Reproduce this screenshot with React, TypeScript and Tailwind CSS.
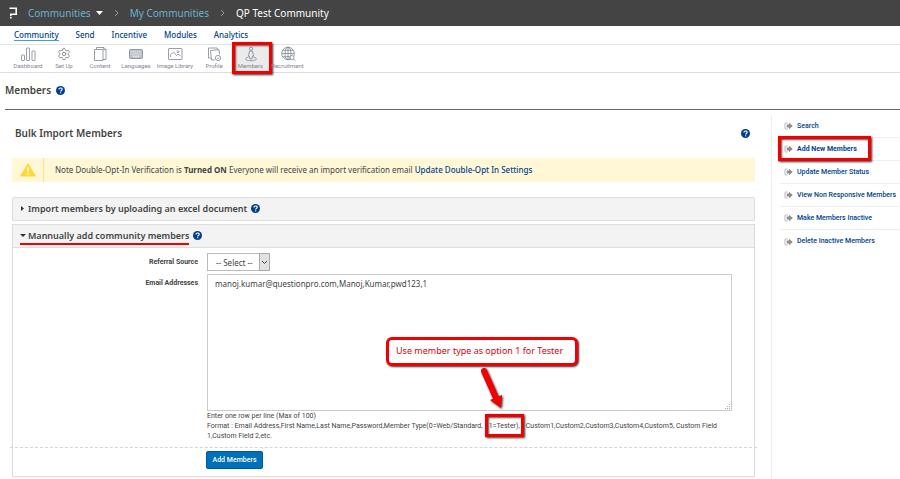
import { useState } from "react";
import type { ReactNode } from "react";
import { Settings } from "lucide-react";

type Tool = { label: string; icon: ReactNode; width: string; active?: boolean };

const navItems = ["Community", "Send", "Incentive", "Modules", "Analytics"];

const sideLinks = [
  "Search",
  "Add New Members",
  "Update Member Status",
  "View Non Responsive Members",
  "Make Members Inactive",
  "Delete Inactive Members",
];

const tools: Tool[] = [
  {
    label: "Dashboard",
    width: "w-9",
    icon: (
      <>
        <rect x="1.500" y="9" width="3" height="5.500" rx="0.500" />
        <rect x="6.500" y="2" width="3" height="12.500" rx="0.500" />
        <rect x="12" y="5" width="3" height="9.500" rx="0.500" />
      </>
    ),
  },
  {
    label: "Set Up",
    width: "w-9",
    icon: <Settings x="1" y="1" width="14" height="14" strokeWidth="1.500" />,
  },
  {
    label: "Content",
    width: "w-9",
    icon: (
      <>
        <path d="M2.500 3.500h8.500v11H2.500z" />
        <path d="M4.500 3.500V1.500h7.500l2 2.200V13.500h-3M11.500 1.500l.3 2.200H14" />
      </>
    ),
  },
  {
    label: "Languages",
    width: "w-9",
    icon: (
      <>
        <rect x="1.500" y="3.500" width="13" height="9" rx="0.800" fill="#c0c5cc" />
        <path d="M3 5.800h10M3.500 8h9" strokeDasharray="1.200 .8" stroke="#eef0f2" />
        <path d="M5 10.300h6" stroke="#eef0f2" />
      </>
    ),
  },
  {
    label: "Image Library",
    width: "w-[42px]",
    icon: (
      <>
        <rect x="1.500" y="2.500" width="13.500" height="11" rx="0.500" />
        <path d="M3.500 11v-2l3-3 3 3.500L11 8l2.500 2" />
        <circle cx="11" cy="5.800" r="1" />
      </>
    ),
  },
  {
    label: "Profile",
    width: "w-9",
    icon: (
      <>
        <path d="M9 14H5.500L4.500 4.500l8.500-.8.500 4.800" />
        <path d="M4.800 12H2.500V2h8.500l.8 1.700" />
        <circle cx="12" cy="12" r="2.600" />
        <path d="M10.900 12l.9.800 1.300-1.500" />
      </>
    ),
  },
  {
    label: "Members",
    width: "w-[37px]",
    active: true,
    icon: (
      <>
        <circle cx="8" cy="2.800" r="1.600" />
        <path d="M6.500 5.200h3l1.200 5h-1.200l-.5 2.800H7l-.5-2.800H5.300z" />
        <path d="M5.500 11.200c-4 .6-4.500 3.500 2.500 3.500s6.500-2.900 2.500-3.500" />
      </>
    ),
  },
  {
    label: "Recruitment",
    width: "w-[37px]",
    icon: (
      <>
        <circle cx="8" cy="7.500" r="6.300" />
        <ellipse cx="8" cy="7.500" rx="3" ry="6.300" />
        <path d="M1.700 7.500h12.600M2.700 4.300h10.600M2.700 10.700h8M8 1.200v12.600" />
        <circle cx="12" cy="11.500" r="2" fill="#fff" />
        <path d="M13.400 13l1.800 1.800" />
      </>
    ),
  },
];

function HelpIcon({ label }: { label: string }) {
  return (
    <button type="button" aria-label={label} className="block shrink-0">
      <svg className="size-[9px]" viewBox="0 0 18 18">
        <circle cx="9" cy="9" r="9" fill="#003f8f" />
        <path d="M5.800 7c0-4 6.600-4 6.600-.3 0 2.300-3.100 2.200-3.100 4.300" fill="none" stroke="#fff" strokeWidth="2.300" />
        <circle cx="9.300" cy="13.700" r="1.400" fill="#fff" />
      </svg>
    </button>
  );
}

function ExitIcon() {
  return (
    <svg className="h-2 w-[9px] shrink-0" viewBox="0 0 18 16">
      <path d="M7 2H3.500Q2 2 2 3.500v9Q2 14 3.500 14H7" fill="none" stroke="#a5a5a5" strokeWidth="1.600" />
      <path d="M5.500 5H10V1.500L17.500 8 10 14.500V11H5.500z" fill="#8d8d8d" />
    </svg>
  );
}

// red frame laid over whatever is being pointed out
function Highlight({ className }: { className: string }) {
  return (
    <span
      className={`pointer-events-none absolute border-3 border-[#f00000] shadow-[1px_1px_2px_#333,inset_1px_1px_2px_#555] ${className}`}
    />
  );
}

function Separator() {
  return (
    <svg className="mx-[11px] h-2 w-[5px]" viewBox="0 0 5 8" fill="none" stroke="#999">
      <path d="M1 1l3 3-3 3" />
    </svg>
  );
}

function TopBar() {
  return (
    <header className="flex h-[26px] items-center bg-[#444] pl-[9px] text-[10px] text-[#6db1cd]">
      <svg className="mr-[11px] h-3 w-2" viewBox="0 0 8 12" fill="none" stroke="#fff" strokeWidth="1.600">
        <path d="M.5 1.300h6.700v5.900H1.800V9" />
        <path d="M1.800 9.800v1.700" />
      </svg>
      <a href="#communities">Communities</a>
      <svg className="ml-[5px] h-1 w-[7px]" viewBox="0 0 7 4">
        <path d="M0 0h7L3.500 4z" fill="#fff" />
      </svg>
      <Separator />
      <a href="#mine">My Communities</a>
      <Separator />
      <span className="text-white">QP Test Community</span>
    </header>
  );
}

function App() {
  const [emails, setEmails] = useState<string>("manoj.kumar@questionpro.com,Manoj,Kumar,pwd123,1");

  return (
    <div className="min-h-screen overflow-x-hidden bg-white font-['Noto_Sans',sans-serif] text-[8px] leading-[11px] text-[#444]">
      <TopBar />

      <nav className="flex h-[19px] items-center gap-[17px] border-b border-[#e4e4e4] pl-3.5 font-medium text-[#00448a]">
        {navItems.map((item, i) => (
          <a key={item} href={`#${item}`} className={i === 0 ? "border-b border-[#3aa0d8]" : "border-b border-transparent"}>
            {item}
          </a>
        ))}
      </nav>

      <div className="flex h-7 border-b border-[#ddd] pl-2.5">
        {tools.map((tool) => (
          <button
            key={tool.label}
            type="button"
            className={`relative flex shrink-0 flex-col items-center pt-px font-['Roboto',sans-serif] text-[6px] leading-2 text-[#7f8791] ${tool.width} ${tool.active ? "bg-[#ebebeb]" : ""}`}
          >
            <svg className="size-4 shrink-0" viewBox="0 0 16 16" fill="none" stroke="#7f8791" strokeWidth="0.800">
              {tool.icon}
            </svg>
            <span className="whitespace-nowrap">{tool.label}</span>
            {tool.active && <Highlight className="-top-[3px] left-0 h-8 w-10" />}
          </button>
        ))}
      </div>

      <div className="ml-[5px] flex h-[37px] items-center gap-[5px] border-b border-[#666] pb-px">
        <h1 className="text-[10px] font-semibold">Members</h1>
        <HelpIcon label="Members help" />
      </div>

      <div className="flex">
        <main className="min-w-0 flex-1 pt-[15px] pr-4 pl-3">
          <div className="flex h-4 items-center justify-between pr-[5px] pl-[3px]">
            <h2 className="text-[10px] font-semibold">Bulk Import Members</h2>
            <HelpIcon label="Import help" />
          </div>

          <div className="mt-[17px] flex h-6 items-center bg-[#fff7d6]">
            <div className="flex h-full w-8 items-center justify-center border-r border-[#ffe27a]">
              <svg className="h-3.5 w-4" viewBox="0 0 16 14">
                <path d="M8 .8L15.300 13H.7z" fill="#ffd83a" stroke="#ffd83a" strokeLinejoin="round" />
                <path d="M8 4.500v4.500M8 10.200v1.500" stroke="#fff" strokeWidth="1.400" />
              </svg>
            </div>
            <p className="pb-0.5 pl-[11px]">
              Note Double-Opt-In Verification is <b>Turned ON</b> Everyone will receive an import verification email{" "}
              <a href="#optin" className="font-medium text-[#00448a]">
                Update Double-Opt In Settings
              </a>
            </p>
          </div>

          <section className="mt-[15px] flex h-6 items-center rounded-t-xs border border-[#ddd] bg-[#f3f3f3] pb-0.5 pl-2">
            <svg className="mr-1 h-[5px] w-[3px]" viewBox="0 0 3 5">
              <path d="M0 0v5l3-2.500z" fill="#333" />
            </svg>
            <h3 className="mr-1 text-[9px] font-semibold">Import members by uploading an excel document</h3>
            <HelpIcon label="Excel help" />
          </section>

          <section className="mt-[3px] border border-[#ddd] shadow-xs">
            <div className="flex h-[23px] items-center border-b border-[#ddd] bg-[#f3f3f3] pb-0.5 pl-[7px]">
              <div className="relative flex items-center">
                <svg className="mr-0.5 h-[3px] w-[6px]" viewBox="0 0 6 3">
                  <path d="M0 0h6L3 3z" fill="#333" />
                </svg>
                <h3 className="text-[9px] font-semibold">Mannually add community members</h3>
                <span className="absolute inset-x-0 -bottom-1 h-0.5 bg-[#f00000]" />
              </div>
              <span className="ml-1">
                <HelpIcon label="Manual help" />
              </span>
            </div>

            <form className="pt-[5px]" onSubmit={(e) => e.preventDefault()}>
              <div className="grid grid-cols-[185px_1fr] gap-x-[9px] gap-y-[3px] pr-[22px]">
                <label htmlFor="source" className="pt-1 text-right font-['Roboto',sans-serif] text-[7px] font-bold">
                  Referral Source
                </label>
                <div className="relative h-[18px] w-[63px]">
                  <select id="source" className="block h-full w-full appearance-none border border-[#bbb] bg-white pl-2">
                    <option>-- Select --</option>
                  </select>
                  <span className="pointer-events-none absolute inset-y-0 right-0 flex w-[11px] items-center justify-center border border-[#aaa] bg-[#e2e2e2]">
                    <svg className="h-[5px] w-[7px] shrink-0" viewBox="0 0 7 5" fill="none" stroke="#444">
                      <path d="M1 1l2.500 2.500L6 1" />
                    </svg>
                  </span>
                </div>

                <label htmlFor="emails" className="pt-1 text-right font-['Roboto',sans-serif] text-[7px] font-bold">
                  Email Addresses
                </label>
                <div>
                  <div className="relative">
                    <textarea
                      id="emails"
                      value={emails}
                      onChange={(e) => setEmails(e.target.value)}
                      className="block h-[137px] w-full resize-none border border-[#ccc] px-[7px] py-[3px] text-[8px] leading-[11px]"
                    />
                    <svg className="absolute right-0.5 bottom-0.5 size-[5px]" viewBox="0 0 5 5" fill="#aaa">
                      <path d="M4 0h1v1H4zM2 2h1v1H2zM4 2h1v1H4zM0 4h1v1H0zM2 4h1v1H2zM4 4h1v1H4z" />
                    </svg>
                    <div className="absolute top-[63px] left-[179px] flex h-[29px] w-[192px] items-center rounded-md border-3 border-[#f00000] bg-white pb-0.5 pl-[7px] text-[9px] whitespace-nowrap text-[#e00010] shadow-[1px_1px_2px_#333]">
                      Use member type as option 1 for Tester
                    </div>
                    <svg
                      className="absolute top-[92px] left-[271px] h-12 w-8 drop-shadow-[1px_1px_1px_#333]"
                      viewBox="0 0 32 48"
                    >
                      <path d="M6 5l12 27" stroke="#f00000" strokeWidth="6" strokeLinecap="round" />
                      <path d="M12 34l12-5-1 13z" fill="#f00000" />
                    </svg>
                  </div>
                  <p className="font-['Roboto',sans-serif] text-[7px] leading-[10px]">
                    Enter one row per line (Max of 100)
                    <br />
                    Format : Email Address,First Name,Last Name,Password,Member Type(0=Web/Standard,
                    <span className="relative mx-1.5">
                      1=Tester),
                      <Highlight className="-inset-x-1 -top-2 h-[23px]" />
                    </span>
                    Custom1,Custom2,Custom3,Custom4,Custom5, Custom Field 1,Custom Field 2,etc.
                  </p>
                </div>
              </div>

              <div className="-mx-[3px] mt-1.5 border-t border-dashed border-[#d5d5d5] pt-[3px] pb-[7px] pl-[196px]">
                <button
                  type="submit"
                  className="block h-[18px] w-[57px] rounded-xs border border-[#00599c] bg-[#0070b8] font-['Roboto',sans-serif] text-[7px] font-medium text-white"
                >
                  Add Members
                </button>
              </div>
            </form>
          </section>
        </main>

        <aside className="mt-[5px] min-h-[364px] w-[129px] shrink-0 border-l border-[#eee] pl-2">
          <ul className="divide-y divide-[#eee] font-['Roboto',sans-serif] font-medium text-[#00448a]">
            {sideLinks.map((link, i) => (
              <li key={link} className="relative h-[23px]">
                <a href={`#${link}`} className={`flex h-full items-center gap-1 pl-1 text-[7px] whitespace-nowrap ${i === 1 ? "font-bold" : ""}`}>
                  <ExitIcon />
                  {link}
                </a>
                {i === 1 && <Highlight className="-top-0.5 -left-0.5 h-[25px] w-[93px]" />}
              </li>
            ))}
          </ul>
        </aside>
      </div>
    </div>
  );
}

export default App;
